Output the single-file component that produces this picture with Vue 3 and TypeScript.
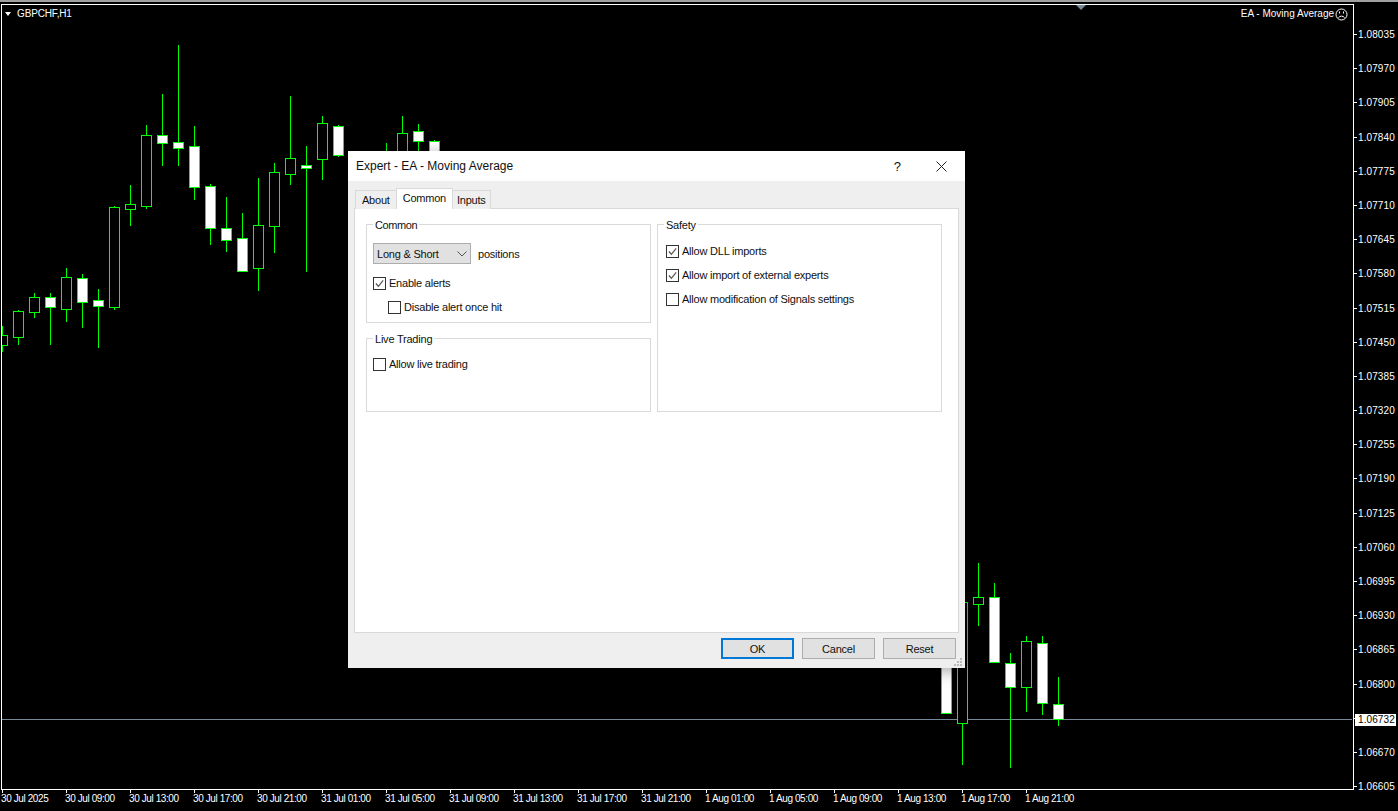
<template>
  <div class="terminal">
    <div class="top-strip"></div>
    <div class="workspace">
      <div class="plot">
        <svg class="chart" viewBox="2 5 1350 784" shape-rendering="crispEdges">
          <line class="price-line" x1="2" x2="1352" y1="719.5" y2="719.5" />
          <g v-for="c in candles" :key="c.x">
            <rect class="wick" :x="c.x" :y="c.high" width="1" :height="c.low - c.high" />
            <rect
              class="body"
              :class="{ down: c.down }"
              :x="c.x - 4.5"
              :y="c.top + 0.5"
              width="10"
              :height="c.bottom - c.top"
            />
          </g>
        </svg>
        <div class="symbol">
          <span class="symbol-arrow"></span>
          GBPCHF,H1
        </div>
        <span class="scale-marker"></span>
        <div class="expert">
          EA - Moving Average
          <svg class="smiley" viewBox="0 0 13 13" fill="none" stroke="#fff">
            <circle cx="6.5" cy="6.5" r="5.5" />
            <path d="M4.5 3.5v2M8.5 3.5v2" />
            <path d="M3.5 9.5c1.6-1.8 4.4-1.8 6 0" />
          </svg>
        </div>
      </div>

      <div class="price-axis">
        <div v-for="p in prices" :key="p" class="price">
          <span v-if="p !== hiddenPrice">{{ p }}</span>
        </div>
        <div class="price-now">1.06732</div>
      </div>

      <div class="time-axis">
        <div v-for="t in times" :key="t" class="time">{{ t }}</div>
      </div>
    </div>

    <section class="dialog">
      <header class="title-bar">
        <span class="title">Expert - EA - Moving Average</span>
        <span class="help">?</span>
        <svg class="close" viewBox="0 0 11 11" stroke="#222" fill="none">
          <path d="M0.5 0.5l10 10M10.5 0.5l-10 10" />
        </svg>
      </header>

      <div class="tabs">
        <button
          v-for="tab in tabs"
          :key="tab"
          class="tab"
          :class="{ active: tab === activeTab }"
          type="button"
          @click="activeTab = tab"
        >
          {{ tab }}
        </button>
      </div>

      <div class="panel">
        <div class="col">
          <fieldset class="group group-common">
            <legend>Common</legend>
            <div class="position-row">
              <div class="select">
                Long &amp; Short
                <svg viewBox="0 0 10 6" fill="none" stroke="#555">
                  <path d="M0.5 0.5L5 5l4.5-4.5" />
                </svg>
              </div>
              <span>positions</span>
            </div>
            <label class="check">
              <input v-model="enableAlerts" type="checkbox" />
              <span class="box">
                <svg v-if="enableAlerts" viewBox="0 0 12 12" fill="none" stroke="#555" stroke-width="1.3">
                  <path d="M2 6l2.8 3L10 2.5" />
                </svg>
              </span>
              Enable alerts
            </label>
            <label class="check nested">
              <input v-model="disableOnce" type="checkbox" />
              <span class="box"></span>
              Disable alert once hit
            </label>
          </fieldset>

          <fieldset class="group group-live">
            <legend>Live Trading</legend>
            <label class="check">
              <input v-model="liveTrading" type="checkbox" />
              <span class="box"></span>
              Allow live trading
            </label>
          </fieldset>
        </div>

        <fieldset class="group group-safety">
          <legend>Safety</legend>
          <label v-for="opt in safety" :key="opt.label" class="check">
            <input v-model="opt.on" type="checkbox" />
            <span class="box">
              <svg v-if="opt.on" viewBox="0 0 12 12" fill="none" stroke="#555" stroke-width="1.3">
                <path d="M2 6l2.8 3L10 2.5" />
              </svg>
            </span>
            {{ opt.label }}
          </label>
        </fieldset>
      </div>

      <footer class="actions">
        <button class="btn default" type="button">OK</button>
        <button class="btn" type="button">Cancel</button>
        <button class="btn" type="button">Reset</button>
      </footer>
      <svg class="grip" viewBox="0 0 11 10" fill="#bbb">
        <rect x="8" y="1" width="2" height="2" />
        <rect x="5" y="4" width="2" height="2" />
        <rect x="8" y="4" width="2" height="2" />
        <rect x="2" y="7" width="2" height="2" />
        <rect x="5" y="7" width="2" height="2" />
        <rect x="8" y="7" width="2" height="2" />
      </svg>
    </section>
  </div>
</template>

<script setup lang="ts">
import { reactive, ref } from 'vue'

interface Candle {
  x: number
  high: number
  low: number
  top: number
  bottom: number
  down: boolean
}

// x, wick high, wick low, body top, body bottom, down candle (white)
const raw: [number, number, number, number, number, number][] = [
  [2, 326, 352, 335, 345, 0],
  [18, 310, 345, 311, 337, 0],
  [34, 293, 318, 297, 312, 0],
  [50, 293, 345, 297, 307, 1],
  [66, 268, 322, 277, 309, 0],
  [82, 274, 328, 278, 302, 1],
  [98, 289, 348, 300, 306, 1],
  [114, 206, 310, 207, 307, 0],
  [130, 185, 226, 204, 209, 0],
  [146, 125, 209, 135, 206, 0],
  [162, 94, 166, 135, 143, 1],
  [178, 45, 166, 142, 148, 1],
  [194, 126, 200, 146, 187, 1],
  [210, 184, 245, 186, 228, 1],
  [226, 197, 252, 228, 240, 1],
  [242, 213, 271, 238, 271, 1],
  [258, 178, 291, 225, 268, 0],
  [274, 163, 253, 172, 226, 0],
  [290, 96, 185, 158, 174, 0],
  [306, 146, 272, 165, 168, 1],
  [322, 116, 180, 123, 159, 0],
  [338, 125, 157, 126, 155, 1],
  [386, 143, 160, 155, 158, 0],
  [402, 116, 160, 133, 158, 0],
  [418, 124, 160, 131, 141, 1],
  [434, 140, 160, 141, 158, 1],
  [946, 660, 714, 660, 713, 1],
  [962, 600, 765, 602, 723, 0],
  [978, 563, 626, 597, 604, 0],
  [994, 583, 663, 597, 662, 1],
  [1010, 653, 768, 663, 687, 1],
  [1026, 636, 712, 641, 687, 0],
  [1042, 636, 715, 643, 703, 1],
  [1058, 677, 726, 704, 719, 1]
]

const candles: Candle[] = raw.map(([x, high, low, top, bottom, down]) => ({
  x,
  high,
  low,
  top,
  bottom,
  down: down === 1
}))

// this level sits behind the current price tag
const hiddenPrice = '1.06735'

const prices = [
  '1.08035', '1.07970', '1.07905', '1.07840', '1.07775', '1.07710', '1.07645', '1.07580',
  '1.07515', '1.07450', '1.07385', '1.07320', '1.07255', '1.07190', '1.07125', '1.07060',
  '1.06995', '1.06930', '1.06865', '1.06800', '1.06735', '1.06670', '1.06605'
]

const times = [
  '30 Jul 2025', '30 Jul 09:00', '30 Jul 13:00', '30 Jul 17:00', '30 Jul 21:00',
  '31 Jul 01:00', '31 Jul 05:00', '31 Jul 09:00', '31 Jul 13:00', '31 Jul 17:00', '31 Jul 21:00',
  '1 Aug 01:00', '1 Aug 05:00', '1 Aug 09:00', '1 Aug 13:00', '1 Aug 17:00', '1 Aug 21:00'
]

const tabs = ['About', 'Common', 'Inputs']
const activeTab = ref('Common')

const enableAlerts = ref(true)
const disableOnce = ref(false)
const liveTrading = ref(false)
const safety = reactive([
  { label: 'Allow DLL imports', on: true },
  { label: 'Allow import of external experts', on: true },
  { label: 'Allow modification of Signals settings', on: false }
])
</script>

<style scoped>
.terminal {
  position: relative;
  width: 1398px;
  height: 811px;
  background: #000;
  overflow: hidden;
  font-family: "Liberation Sans", Arial, sans-serif;
}

.top-strip {
  height: 2px;
  background: #a0a0a0;
  margin-bottom: 2px;
}

.workspace {
  display: grid;
  grid-template-columns: 1353px 1fr;
  grid-template-rows: 786px 21px;
  padding-left: 1px;
}

.plot {
  position: relative;
  border: 1px solid #fff;
  overflow: hidden;
}

.chart {
  display: block;
  width: 1350px;
  height: 784px;
}

.price-line {
  stroke: #778899;
}

.wick {
  fill: #00ff00;
}

.body {
  fill: #000;
  stroke: #00ff00;
}

.body.down {
  fill: #fff;
}

.symbol {
  position: absolute;
  left: 3px;
  top: 2px;
  display: flex;
  align-items: center;
  gap: 6px;
  color: #fff;
  font-size: 10px;
  line-height: 14px;
  letter-spacing: -0.15px;
}

.symbol-arrow {
  width: 0;
  height: 0;
  border-left: 3.5px solid transparent;
  border-right: 3.5px solid transparent;
  border-top: 4px solid #fff;
}

.scale-marker {
  position: absolute;
  left: 1074px;
  top: 0;
  width: 0;
  height: 0;
  border-left: 5px solid transparent;
  border-right: 5px solid transparent;
  border-top: 5px solid #778899;
}

.expert {
  position: absolute;
  right: 5px;
  top: 2px;
  display: flex;
  align-items: center;
  gap: 1px;
  color: #fff;
  font-size: 10px;
  line-height: 14px;
}

.smiley {
  width: 13px;
  height: 13px;
}

.price-axis {
  position: relative;
  padding-top: 22px;
  color: #fff;
  font-size: 10px;
  letter-spacing: 0.1px;
}

.price {
  position: relative;
  height: 34.2px;
  line-height: 17px;
  padding-left: 4px;
}

.price::before {
  content: "";
  position: absolute;
  left: 0;
  top: 8px;
  width: 3px;
  height: 1px;
  background: #fff;
}

.price-now {
  position: absolute;
  left: 1px;
  top: 710px;
  width: 41px;
  height: 12px;
  line-height: 12px;
  padding-left: 3px;
  box-sizing: border-box;
  background: #fff;
  color: #000;
}

.time-axis {
  grid-column: 1 / 3;
  display: flex;
  color: #fff;
  font-size: 10px;
  letter-spacing: -0.4px;
}

.time {
  position: relative;
  width: 64px;
  flex: none;
  padding-top: 2px;
  line-height: 14px;
  white-space: nowrap;
}

.time::before {
  content: "";
  position: absolute;
  left: 1px;
  top: 0;
  width: 1px;
  height: 3px;
  background: #fff;
}

.dialog {
  position: absolute;
  left: 348px;
  top: 151px;
  width: 617px;
  height: 517px;
  display: flex;
  flex-direction: column;
  background: #efefef;
  color: #111;
  font-size: 11px;
  letter-spacing: -0.22px;
  box-shadow: 0 3px 14px rgba(0, 0, 0, 0.35);
}

.title-bar {
  flex: none;
  height: 30px;
  display: flex;
  align-items: center;
  background: #fff;
  padding: 0 18px 0 8px;
  letter-spacing: 0;
}

.title {
  flex: 1;
  font-size: 12px;
}

.help {
  font-size: 13px;
  margin-right: 35px;
}

.close {
  width: 11px;
  height: 11px;
}

.tabs {
  flex: none;
  height: 28px;
  display: flex;
  align-items: flex-end;
  padding-left: 8px;
  position: relative;
  z-index: 1;
  margin-bottom: -1px;
}

.tab {
  height: 19px;
  padding: 0 6px;
  border: 1px solid #d9d9d9;
  border-bottom: none;
  background: #efefef;
  font: inherit;
  letter-spacing: inherit;
  color: inherit;
  margin-left: -1px;
}

.tab:last-child {
  padding: 0 4px;
}

.tab.active {
  height: 21px;
  background: #fff;
  padding: 0 6px 2px;
  position: relative;
}

.panel {
  flex: 1;
  margin: 0 6px;
  padding: 7px 16px 0 11px;
  display: flex;
  gap: 6px;
  align-items: flex-start;
  background: #fff;
  border: 1px solid #d9d9d9;
}

.col {
  display: flex;
  flex-direction: column;
  gap: 7px;
}

.group {
  margin: 0;
  width: 285px;
  box-sizing: border-box;
  border: 1px solid #d9d9d9;
  padding: 0 6px;
  min-width: 0;
}

.group legend {
  margin-left: 0;
  padding: 2px 2px 0;
  line-height: 14px;
}

.group-common legend {
  letter-spacing: -0.4px;
}

.group-common {
  height: 107px;
}

.group-live {
  height: 82px;
}

.group-safety {
  height: 196px;
  padding-left: 8px;
}

.group-safety legend {
  margin-left: -2px;
}

.position-row {
  display: flex;
  align-items: center;
  gap: 7px;
  margin-top: 11px;
}

.select {
  width: 98px;
  height: 21px;
  box-sizing: border-box;
  display: flex;
  align-items: center;
  justify-content: space-between;
  padding: 0 3px 0 3px;
  background: #e1e1e1;
  border: 1px solid #adadad;
}

.select svg {
  width: 10px;
  height: 6px;
}

.check {
  display: flex;
  align-items: center;
  gap: 3px;
  height: 24px;
}

.check input {
  display: none;
}

.box {
  width: 13px;
  height: 13px;
  box-sizing: border-box;
  border: 1px solid #333;
  background: #fff;
  flex: none;
}

.box svg {
  display: block;
  width: 11px;
  height: 11px;
}

.group-common .check:first-of-type {
  margin-top: 7px;
}

.nested {
  margin-left: 15px;
}

.group-live .check {
  margin-top: 6px;
}

.group-safety .check:first-of-type {
  margin-top: 7px;
}

.actions {
  flex: none;
  height: 35px;
  display: flex;
  justify-content: flex-end;
  gap: 8px;
  padding: 5px 9px 0 0;
  box-sizing: border-box;
}

.btn {
  width: 73px;
  height: 21px;
  box-sizing: border-box;
  background: #e1e1e1;
  border: 1px solid #adadad;
  font: inherit;
  letter-spacing: inherit;
  color: inherit;
  padding: 0;
}

.btn.default {
  border: 2px solid #0078d7;
}

.grip {
  position: absolute;
  right: 2px;
  bottom: 1px;
  width: 11px;
  height: 10px;
}
</style>

<style>
html,
body {
  margin: 0;
  background: #000;
}
</style>
